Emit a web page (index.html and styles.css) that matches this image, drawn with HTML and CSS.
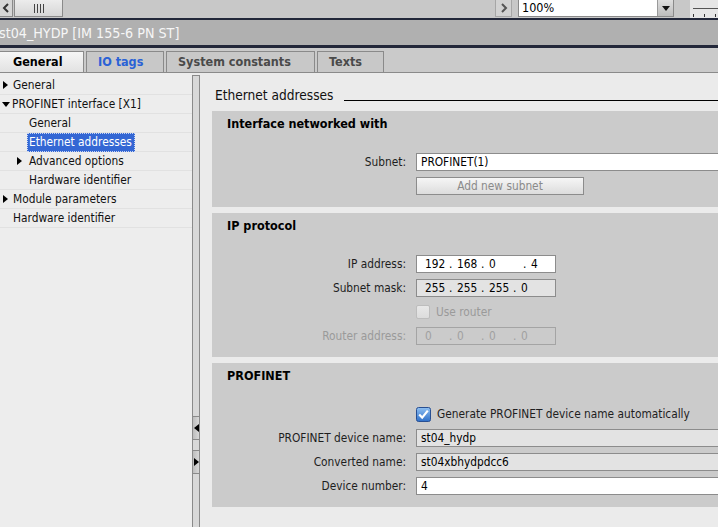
FILE: index.html
```html
<!DOCTYPE html>
<html>
<head>
<meta charset="utf-8">
<link rel="stylesheet" href="styles.css">
</head>
<body>
<div class="toolbar">
  <div class="tb-btn tb-left"><svg width="8" height="10" viewBox="0 0 8 10"><path d="M6 1 L2 5 L6 9" fill="none" stroke="#333" stroke-width="2"/></svg></div>
  <div class="tb-thumb"><span></span><span></span><span></span><span></span></div>
  <div class="tb-space"></div>
  <div class="tb-btn tb-right"><svg width="8" height="10" viewBox="0 0 8 10"><path d="M2 1 L6 5 L2 9" fill="none" stroke="#555" stroke-width="2"/></svg></div>
  <div class="combo"><div class="combo-val">100%</div><div class="combo-drop"><svg width="8" height="5" viewBox="0 0 8 5"><path d="M0 0 H8 L4 5 Z" fill="#111"/></svg></div></div>
  <div class="ruler"><div class="ruler-line"></div><div class="ticks"><i></i><i></i><i></i></div></div>
</div>
<div class="titlebar">st04_HYDP [IM 155-6 PN ST]</div>
<div class="tabs">
  <div class="tab active">General</div>
  <div class="tab blue">IO tags</div>
  <div class="tab">System constants</div>
  <div class="tab">Texts</div>
</div>
<div class="main">
  <div class="tree">
    <div class="row l0"><span class="tri r"></span>General</div>
    <div class="row l0"><span class="tri d"></span>PROFINET interface [X1]</div>
    <div class="row l1"><span class="notri"></span>General</div>
    <div class="row l1"><span class="notri"></span><span class="sel">Ethernet addresses</span></div>
    <div class="row l1"><span class="tri r"></span>Advanced options</div>
    <div class="row l1"><span class="notri"></span>Hardware identifier</div>
    <div class="row l0"><span class="tri r"></span>Module parameters</div>
    <div class="row l0"><span class="notri"></span>Hardware identifier</div>
  </div>
  <div class="splitter">
    <div class="sp-fill1"></div>
    <div class="sp-btn"><span class="tri l"></span></div>
    <div class="sp-gap"></div>
    <div class="sp-btn"><span class="tri r"></span></div>
    <div class="sp-fill2"></div>
  </div>
  <div class="content">
    <div class="heading"><span>Ethernet addresses</span><div class="hline"></div></div>

    <div class="sec">
      <div class="sec-title">Interface networked with</div>
      <div class="rows">
        <div class="lbl">Subnet:</div>
        <div class="field white wide">PROFINET(1)</div>
        <div class="lbl"></div>
        <div class="button">Add new subnet</div>
      </div>
    </div>

    <div class="sec">
      <div class="sec-title">IP protocol</div>
      <div class="rows">
        <div class="lbl">IP address:</div>
        <div class="field white ip"><span class="oct">192</span><span class="dot">.</span><span class="oct">168</span><span class="dot">.</span><span class="oct o3">0</span><span class="dot">.</span><span class="oct">4</span></div>
        <div class="lbl">Subnet mask:</div>
        <div class="field grey ip"><span class="oct">255</span><span class="dot">.</span><span class="oct">255</span><span class="dot">.</span><span class="oct">255</span><span class="dot">.</span><span class="oct">0</span></div>
        <div class="lbl"></div>
        <div class="chkrow dis"><span class="cb off"></span>Use router</div>
        <div class="lbl dis">Router address:</div>
        <div class="field disabled ip"><span class="oct">0</span><span class="dot">.</span><span class="oct">0</span><span class="dot">.</span><span class="oct">0</span><span class="dot">.</span><span class="oct">0</span></div>
      </div>
    </div>

    <div class="sec">
      <div class="sec-title">PROFINET</div>
      <div class="rows">
        <div class="lbl"></div>
        <div class="chkrow"><svg class="cb-on" width="15" height="15" viewBox="0 0 15 15"><defs><linearGradient id="g" x1="0" y1="0" x2="0" y2="1"><stop offset="0" stop-color="#8fc0f2"/><stop offset="1" stop-color="#2e6fc8"/></linearGradient></defs><rect x="0.5" y="0.5" width="14" height="14" rx="2" fill="url(#g)" stroke="#284f92"/><path d="M3.2 7.4 L6.2 10.6 L11.8 3.6" fill="none" stroke="#ffffff" stroke-width="2.2"/></svg>Generate PROFINET device name automatically</div>
        <div class="lbl">PROFINET device name:</div>
        <div class="field grey wide">st04_hydp</div>
        <div class="lbl">Converted name:</div>
        <div class="field grey wide">st04xbhydpdcc6</div>
        <div class="lbl">Device number:</div>
        <div class="field white wide">4</div>
      </div>
    </div>
  </div>
</div>
</body>
</html>
```
FILE: styles.css
```css
* { box-sizing: border-box; }
html, body { margin: 0; padding: 0; }
body {
  width: 718px;
  height: 527px;
  overflow: hidden;
  background: #ebebeb;
  font-family: "DejaVu Sans Condensed", "DejaVu Sans", sans-serif;
  font-size: 11.8px;
  color: #1a1a1a;
}

/* toolbar */
.toolbar {
  height: 18px;
  background: #c8c8c8;
  display: flex;
  align-items: flex-start;
}
.tb-btn {
  height: 17px;
  display: flex;
  align-items: center;
  justify-content: center;
}
.tb-left {
  width: 13px;
  background: #d6d6d6;
  border: 1px solid #8a8a8a;
  border-left: none;
  border-top: none;
}
.tb-thumb {
  width: 49px;
  height: 17px;
  margin-left: 1px;
  background: linear-gradient(#ececec, #d6d6d6);
  border: 1px solid #8a8a8a;
  border-top: none;
  display: flex;
  justify-content: center;
  align-items: center;
  gap: 1px;
}
.tb-thumb span {
  width: 1px;
  height: 9px;
  background: #444;
  margin: 0 0.5px;
}
.tb-space { flex: 1; }
.tb-right {
  width: 17px;
  background: #d2d2d2;
  border: 1px solid #a6a6a6;
  border-top: none;
}
.combo {
  width: 156px;
  height: 17px;
  margin-left: 6px;
  border: 1px solid #8a8a8a;
  border-top: none;
  display: flex;
  background: #fff;
}
.combo-val {
  flex: 1;
  padding-left: 3px;
  font-size: 12.5px;
  line-height: 16px;
  color: #000;
}
.combo-drop {
  width: 16px;
  border-left: 1px solid #9a9a9a;
  background: linear-gradient(#dedede, #bdbdbd);
  display: flex;
  align-items: center;
  justify-content: center;
}
.ruler {
  width: 28px;
  height: 18px;
  margin-left: 16px;
  background: #e6e6e6;
  padding-top: 8px;
}
.ruler-line {
  height: 1px;
  margin-left: 3px;
  background: #555;
}
.ticks {
  display: flex;
  gap: 10px;
  margin-top: 5px;
  margin-left: 3px;
}
.ticks i {
  display: block;
  width: 1px;
  height: 3px;
  background: #333;
}

/* title bar */
.titlebar {
  height: 30px;
  border-top: 2px solid #23283a;
  border-bottom: 3px solid #23283a;
  background: #b0b0b0;
  color: #f6f6f6;
  font-size: 14.2px;
  line-height: 26px;
  margin-left: -1px;
  white-space: nowrap;
}

/* tabs */
.tabs {
  height: 25px;
  background: #cacaca;
  border-bottom: 1px solid #8a8a8a;
  display: flex;
  align-items: flex-end;
  gap: 2px;
}
.tab {
  height: 21px;
  border: 1px solid #8a8a8a;
  border-bottom: none;
  background: #c8c8c8;
  font-weight: bold;
  font-size: 12.5px;
  line-height: 20px;
  color: #4a4a4a;
  padding: 0 11px;
  white-space: nowrap;
}
.tab:nth-child(1) { width: 84px; padding-left: 13px; border-left: none; }
.tab:nth-child(2) { width: 78px; }
.tab:nth-child(3) { width: 149px; }
.tab:nth-child(4) { width: 67px; }
.tab.active {
  background: linear-gradient(#f6f6f6, #e2e2e2);
  color: #000;
}
.tab.blue { color: #2a62d6; }

/* main */
.main {
  display: flex;
  height: 454px;
}
.tree {
  width: 192px;
  background: #ededed;
  padding-top: 3px;
}
.row {
  height: 19px;
  border-bottom: 1px solid #e1e1e1;
  display: flex;
  align-items: center;
  white-space: nowrap;
  color: #111;
}
.row.l0 { padding-left: 3px; }
.row.l1 { padding-left: 17px; }
.tri {
  width: 0;
  height: 0;
  display: inline-block;
  margin-right: 5px;
}
.tri.r {
  border-top: 4px solid transparent;
  border-bottom: 4px solid transparent;
  border-left: 5px solid #000;
}
.tri.l {
  border-top: 4px solid transparent;
  border-bottom: 4px solid transparent;
  border-right: 5px solid #000;
  margin: 0;
}
.tri.d {
  border-left: 4px solid transparent;
  border-right: 4px solid transparent;
  border-top: 5px solid #000;
  margin-right: 2px;
  margin-left: -1px;
}
.notri {
  display: inline-block;
  width: 10px;
}
.row.l1 .notri { width: 12px; }
.row.l1 .tri.r { margin-right: 7px; }
.sel {
  background: #3467d4;
  color: #fff;
  border: 1px dotted #c9d6f2;
  padding: 1px 2px 1px 1px;
  margin-left: -2px;
  line-height: 15px;
}

/* splitter */
.splitter {
  width: 8px;
  margin-top: 2px;
  border: 1px solid #8a8a8a;
  border-bottom: none;
  background: #d8d8d8;
  display: flex;
  flex-direction: column;
}
.sp-fill1 { height: 340px; }
.sp-btn {
  height: 24px;
  border-top: 1px solid #8a8a8a;
  border-bottom: 1px solid #8a8a8a;
  background: linear-gradient(90deg, #bdbdbd, #d8d8d8);
  display: flex;
  align-items: center;
  justify-content: center;
}
.sp-btn .tri.r { margin: 0; }
.sp-gap { height: 10px; }
.sp-fill2 { flex: 1; }

/* content */
.content {
  flex: 1;
  padding-left: 12px;
  min-width: 0;
}
.heading {
  height: 38px;
  padding-top: 14px;
  padding-left: 3px;
  display: flex;
  align-items: flex-start;
  font-size: 13.6px;
  line-height: 16px;
  color: #111;
  white-space: nowrap;
}
.hline {
  flex: 1;
  height: 14px;
  border-bottom: 1px solid #000;
  margin-left: 11px;
}
.sec {
  background: #cbcbcb;
  padding: 5px 0 12px 0;
  margin-bottom: 6px;
}
.sec-title {
  padding-left: 15px;
  font-weight: bold;
  font-size: 12.5px;
  line-height: 16px;
  color: #000;
}
.rows {
  margin-top: 21px;
  display: grid;
  grid-template-columns: 194px 1fr;
  column-gap: 10px;
  row-gap: 6px;
}
.lbl {
  text-align: right;
  line-height: 18px;
  height: 18px;
  white-space: nowrap;
  color: #1e1e1e;
}
.dis { color: #9a9a9a; }
.field {
  height: 18px;
  border: 1px solid #8c8c8c;
  line-height: 16px;
  padding-left: 4px;
  color: #000;
  white-space: nowrap;
}
.field.white { background: #fff; }
.field.grey { background: #e3e3e3; }
.field.disabled {
  background: #cbcbcb;
  border-color: #a4a4a4;
  color: #a0a0a0;
}
.field.wide { margin-right: -4px; }
.field.ip {
  width: 140px;
  padding-left: 8px;
  display: flex;
}
.oct { width: 24px; }
.dot { width: 8px; }
.o3 { width: 34px; }
.button {
  width: 168px;
  height: 18px;
  border: 1px solid #8c8c8c;
  background: linear-gradient(#f6f6f6, #dcdcdc);
  color: #8a8a8a;
  text-align: center;
  line-height: 16px;
}
.chkrow {
  height: 18px;
  display: flex;
  align-items: center;
  white-space: nowrap;
  color: #1e1e1e;
}
.chkrow.dis { color: #9a9a9a; }
.cb {
  width: 14px;
  height: 14px;
  margin-right: 6px;
  display: inline-block;
}
.cb.off {
  border: 1px solid #bdbdbd;
  border-radius: 2px;
  background: linear-gradient(#e8e8e8, #dcdcdc);
}
.cb-on { margin-right: 6px; flex: none; }
```
